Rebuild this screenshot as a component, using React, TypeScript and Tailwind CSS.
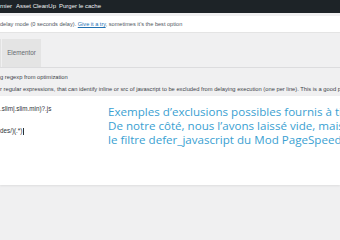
import React from "react";

export default function App() {
  return (
    <div className="w-[340px] h-[240px] overflow-hidden bg-[#f0f0f1] font-['Liberation_Sans',Arial,sans-serif] flex flex-col">
      {/* admin bar */}
      <div className="h-[13px] shrink-0 bg-[#1d2327] text-[#f0f0f1] text-[6px] flex items-center whitespace-nowrap">
        <span className="w-[16px]">rnier</span>
        <span className="w-[43px]">Asset CleanUp</span>
        <span>Purger le cache</span>
      </div>
      <div className="h-[3px] shrink-0" />
      {/* notice row */}
      <div className="h-[17px] shrink-0 bg-white flex items-center text-[5.6px] text-[#50575e] whitespace-nowrap border-b border-[#e4e4e4]">
        <span>
          delay mode (0 seconds delay).{" "}
          <span className="text-[#2271b1] underline">Give it a try</span>, sometimes it's the best option
        </span>
      </div>
      {/* tabs */}
      <div className="h-[6px] shrink-0" />
      <div className="h-[29px] shrink-0 flex border-b border-[#dcdcde]">
        <div className="w-[1px] bg-[#e2e2e2]" />
        <div className="w-[1px]" />
        <div className="w-[39px] bg-[#e4e4e4] flex items-center justify-center text-[6.3px] text-[#646970]">
          Elementor
        </div>
      </div>
      {/* description */}
      <div className="pt-[3px] text-[5.75px] text-[#3c434a] whitespace-nowrap leading-[12px] overflow-hidden">
        <div>g regexp from optimization</div>
        <div>r regular expressions, that can identify inline or src of javascript to be excluded from delaying execution (one per line). This is a good practice</div>
      </div>
      <div className="h-[1px] shrink-0" />
      {/* textarea */}
      <div className="h-[89px] shrink-0 bg-white flex shadow-[0_1px_2px_rgba(0,0,0,0.08)] overflow-hidden">
        <div className="w-[108px] shrink-0 pt-[2px] text-[6.3px] text-[#2c3338] leading-[22px] whitespace-nowrap">
          <div>.slim|.slim.min)?.js</div>
          <div className="flex items-center">
            des/)(.*)<span className="inline-block w-[1px] h-[7px] bg-[#2c3338] ml-[0.5px]" />
          </div>
        </div>
        <div className="pt-[9px] text-[11.6px] leading-[14px] text-[#3a9fd2] font-['Open_Sans',sans-serif] whitespace-nowrap">
          <div>Exemples d’exclusions possibles fournis à titre</div>
          <div>De notre côté, nous l’avons laissé vide, mais</div>
          <div>le filtre defer_javascript du Mod PageSpeed</div>
        </div>
      </div>
      <div className="flex-1" />
    </div>
  );
}
